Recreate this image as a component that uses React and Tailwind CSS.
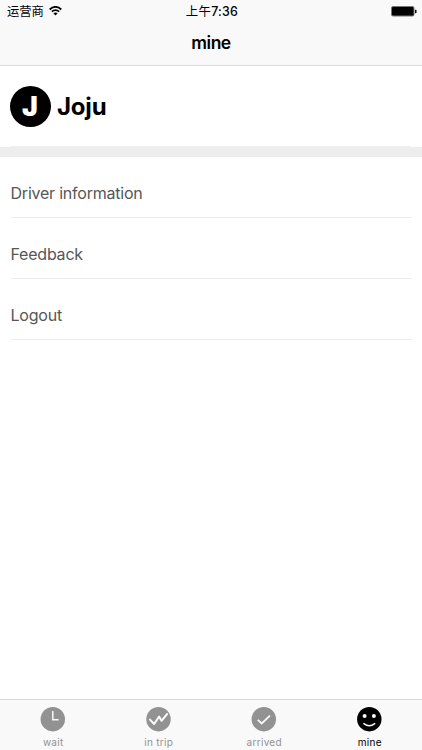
import React from 'react';

const MENU = ['Driver information', 'Feedback', 'Logout'];

const TABS = [
  { label: 'wait', Icon: ClockIcon },
  { label: 'in trip', Icon: TripIcon },
  { label: 'arrived', Icon: CheckIcon },
  { label: 'mine', Icon: SmileIcon, active: true },
];

function ClockIcon() {
  return (
    <svg className="w-[25px] h-[25px]" viewBox="0 0 25 25" fill="none">
      <circle cx="12.8" cy="12.2" r="12.2" fill="currentColor" />
      <path d="M12.8 4V12.7H18.6" stroke="#f9f9f9" strokeWidth="1.5" />
    </svg>
  );
}

function TripIcon() {
  return (
    <svg className="w-[25px] h-[25px]" viewBox="0 0 25 25" fill="none">
      <circle cx="12.5" cy="12.2" r="12.2" fill="currentColor" />
      <path
        d="M4 12.6L8.1 17L13.1 9.6L15.5 13.8L21.1 7"
        stroke="#f9f9f9"
        strokeWidth="2"
        strokeLinecap="round"
        strokeLinejoin="round"
      />
    </svg>
  );
}

function CheckIcon() {
  return (
    <svg className="w-[25px] h-[25px]" viewBox="0 0 25 25" fill="none">
      <circle cx="12.8" cy="12.2" r="12.2" fill="currentColor" />
      <path d="M6.8 12.8L10.7 16.5L19 8.6" stroke="#f9f9f9" strokeWidth="1.8" />
    </svg>
  );
}

function SmileIcon() {
  return (
    <svg className="w-[25px] h-[25px]" viewBox="0 0 25 25" fill="none">
      <circle cx="12.3" cy="12.2" r="12.2" fill="currentColor" />
      <circle cx="7.6" cy="9" r="2" fill="#f9f9f9" />
      <circle cx="16.9" cy="9" r="2" fill="#f9f9f9" />
      <path d="M6.9 16.6Q12.3 20.9 17.7 16.6" stroke="#f9f9f9" strokeWidth="1.5" strokeLinecap="round" />
    </svg>
  );
}

function WifiIcon() {
  return (
    <svg className="w-[13px] h-[10px]" viewBox="0 0 13 10" fill="none" stroke="#000">
      <path d="M0.7 3.5Q6.5 -1.8 12.3 3.5" strokeWidth="1.7" />
      <path d="M2.8 5.7Q6.5 2.4 10.2 5.7" strokeWidth="1.6" />
      <path d="M4.4 7.3Q6.5 5.5 8.6 7.3L6.5 9.5Z" fill="#000" stroke="none" />
    </svg>
  );
}

function BatteryIcon() {
  return (
    <svg className="w-[26px] h-[11px]" viewBox="0 0 26 11">
      <rect x="0.5" y="0.5" width="22.5" height="9.5" rx="1.5" fill="#000" stroke="#777" />
      <path d="M24 3.7h0.7q0.8 0 0.8 0.8v2q0 0.8-0.8 0.8H24z" fill="#000" />
    </svg>
  );
}

function StatusBar() {
  return (
    <div className="grid grid-cols-3 items-center h-[22px] pl-[7px] pr-[5px] text-black">
      <div className="flex items-center gap-[5px]">
        <span className="pt-[2px] text-[12.3px] leading-none">运营商</span>
        <WifiIcon />
      </div>
      <span className="pt-[2px] text-center text-[12.4px] leading-none tracking-[0.25px] whitespace-nowrap">
        上午<span className="font-medium">7:36</span>
      </span>
      <div className="flex justify-end">
        <BatteryIcon />
      </div>
    </div>
  );
}

export default function App() {
  return (
    <div className="flex flex-col w-full h-[750px] bg-white font-[Inter,'Noto_Sans_CJK_SC',sans-serif]">
      <header className="h-[66px] shrink-0 bg-[#f9f9f9] border-b border-[#dcdcdc]">
        <StatusBar />
        <h1 className="h-[43px] text-center text-[17.5px] leading-[42px] tracking-[-0.5px] font-semibold text-black">mine</h1>
      </header>

      {/* Profile */}
      <section className="flex flex-col h-[81px] shrink-0 pl-[10px] pr-[11px]">
        <div className="flex flex-1 items-center gap-[6px] border-b border-[#efefef]">
          <div className="flex items-center justify-center w-[41px] h-[41px] pt-px pr-px rounded-full bg-black text-white text-[26.5px] leading-none font-black">
            J
          </div>
          <span className="pt-[2px] text-[24px] leading-none tracking-[-0.2px] font-bold text-black">Joju</span>
        </div>
      </section>
      <div className="h-[10px] shrink-0 bg-[#ededed]" />

      <main className="flex-1 px-[10.5px]">
        {MENU.map((item) => (
          <div
            key={item}
            className="h-[61px] pt-[12px] border-b border-[#ededed] text-[16px] leading-[48px] tracking-[-0.22px] text-[#565656]"
          >
            {item}
          </div>
        ))}
      </main>

      {/* Tab bar */}
      <nav className="grid grid-cols-4 h-[51px] shrink-0 bg-[#f9f9f9] border-t border-[#d9d9d9]">
        {TABS.map(({ label, Icon, active }) => (
          <div
            key={label}
            className={`flex flex-col items-center pt-[7px] ${active ? 'text-black' : 'text-[#929292]'}`}
          >
            <Icon />
            <span className="mt-[4px] pl-px text-[10px] leading-[12px] tracking-[0.3px]">{label}</span>
          </div>
        ))}
      </nav>
    </div>
  );
}
